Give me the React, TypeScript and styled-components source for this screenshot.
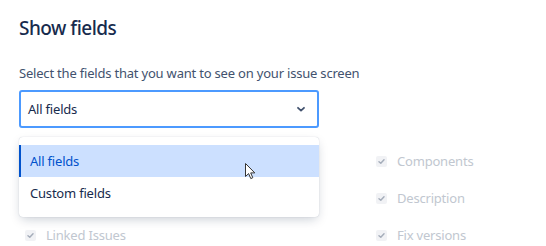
import React from "react";
import styled, { createGlobalStyle } from "styled-components";

const Global = createGlobalStyle`
  html, body { margin: 0; padding: 0; background: #ffffff; }
  body { font-family: "Noto Sans", "Open Sans", sans-serif; color: #172b4d; }
  * { box-sizing: border-box; }
`;

const Page = styled.div`
  width: 546px;
  height: 246px;
  overflow: hidden;
  padding: 15px 0 0 19px;
  position: relative;
`;

const Title = styled.h2`
  margin: 0;
  font-size: 19px;
  font-weight: 500;
  line-height: 26px;
  color: #172b4d;
  letter-spacing: -0.5px;
`;

const Description = styled.p`
  margin: 22px 0 0 0;
  font-size: 13px;
  letter-spacing: -0.2px;
  line-height: 20px;
  color: #42526e;
`;

const SelectWrap = styled.div`
  position: relative;
  width: 300px;
  margin-top: 7px;
`;

const Control = styled.div`
  height: 38px;
  border: 2px solid #4c9aff;
  border-radius: 3px;
  display: flex;
  align-items: center;
  justify-content: space-between;
  padding: 0 11px 0 7px;
  font-size: 13px;
  letter-spacing: -0.2px;
  color: #172b4d;
  background: #fff;
`;

const Menu = styled.div`
  position: absolute;
  top: calc(100% + 9px);
  left: 0;
  width: 300px;
  background: #fff;
  border-radius: 4px;
  padding: 8px 0;
  box-shadow: 0 4px 11px -2px rgba(9, 30, 66, 0.22), 0 0 1px rgba(9, 30, 66, 0.25);
  z-index: 2;
`;

const Option = styled.div<{ $active?: boolean }>`
  height: 32px;
  display: flex;
  align-items: center;
  padding-left: ${(p) => (p.$active ? "9px" : "11px")};
  font-size: 13px;
  letter-spacing: -0.2px;
  color: ${(p) => (p.$active ? "#0052cc" : "#172b4d")};
  background: ${(p) => (p.$active ? "#cce0ff" : "transparent")};
  border-left: ${(p) => (p.$active ? "2px solid #0052cc" : "none")};
`;

const Fields = styled.div`
  display: grid;
  grid-template-columns: 351px 150px;
  row-gap: 17px;
  margin-top: 23px;
  padding-left: 6px;
`;

const Field = styled.div`
  display: flex;
  align-items: center;
  gap: 10px;
  height: 20px;
  font-size: 13px;
  letter-spacing: -0.2px;
  color: #c1c7d0;
`;

const Box = styled.span`
  width: 11px;
  height: 11px;
  border-radius: 2px;
  background: #f1f2f5;
  display: inline-flex;
  align-items: center;
  justify-content: center;
`;

const Cursor = styled.svg`
  position: absolute;
  left: 245px;
  top: 163px;
  z-index: 3;
`;

const Check = () => (
  <Box>
    <svg width="9" height="9" viewBox="0 0 10 10">
      <path d="M2.2 5.2 L4.2 7 L7.8 3" fill="none" stroke="#a5adba" strokeWidth="1.6" strokeLinecap="round" strokeLinejoin="round" />
    </svg>
  </Box>
);

const Chevron = () => (
  <svg width="10" height="10" viewBox="0 0 10 10">
    <path d="M2 3.8 L5 6.6 L8 3.8" fill="none" stroke="#42526e" strokeWidth="1.8" strokeLinecap="round" strokeLinejoin="round" />
  </svg>
);

const left: (string | null)[] = [null, null, "Linked Issues"];
const right = ["Components", "Description", "Fix versions"];

export default function App() {
  return (
    <Page>
      <Global />
      <Title>Show fields</Title>
      <Description>Select the fields that you want to see on your issue screen</Description>
      <SelectWrap>
        <Control>
          <span>All fields</span>
          <Chevron />
        </Control>
        <Menu>
          <Option $active>All fields</Option>
          <Option>Custom fields</Option>
        </Menu>
      </SelectWrap>
      <Fields>
        {right.map((r, i) => (
          <React.Fragment key={r}>
            {left[i] ? (
              <Field>
                <Check />
                {left[i]}
              </Field>
            ) : (
              <Field />
            )}
            <Field>
              <Check />
              {r}
            </Field>
          </React.Fragment>
        ))}
      </Fields>
      <Cursor width="12" height="18" viewBox="0 0 12 18">
        <path d="M0.5 0.5 L0.5 13.5 L3.6 10.6 L5.8 15.6 L7.8 14.7 L5.7 9.9 L9.8 9.9 Z" fill="#fff" stroke="#333" strokeWidth="1" strokeLinejoin="round" />
      </Cursor>
    </Page>
  );
}
